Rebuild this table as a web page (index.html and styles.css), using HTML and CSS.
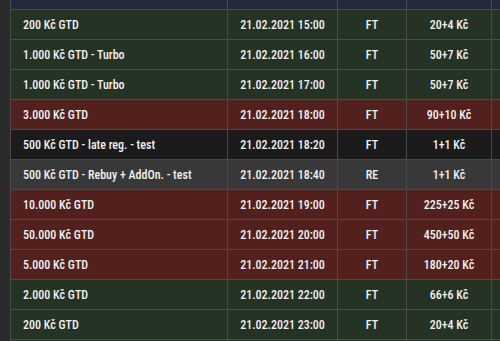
FILE: index.html
```html
<!DOCTYPE html>
<html>
<head>
<meta charset="utf-8">
<link rel="stylesheet" href="styles.css">
</head>
<body>
<div class="page">
  <div class="side"></div>
  <table class="list">
    <colgroup>
      <col class="c-name"><col class="c-date"><col class="c-type"><col class="c-buy"><col class="c-rest">
    </colgroup>
    <tr class="head"><td></td><td></td><td></td><td></td><td></td></tr>
    <tr class="green"><td class="name">200 Kč GTD</td><td>21.02.2021 15:00</td><td>FT</td><td>20+4 Kč</td><td></td></tr>
    <tr class="green"><td class="name">1.000 Kč GTD - Turbo</td><td>21.02.2021 16:00</td><td>FT</td><td>50+7 Kč</td><td></td></tr>
    <tr class="green"><td class="name">1.000 Kč GTD - Turbo</td><td>21.02.2021 17:00</td><td>FT</td><td>50+7 Kč</td><td></td></tr>
    <tr class="red"><td class="name">3.000 Kč GTD</td><td>21.02.2021 18:00</td><td>FT</td><td>90+10 Kč</td><td></td></tr>
    <tr class="black"><td class="name">500 Kč GTD - late reg. - test</td><td>21.02.2021 18:20</td><td>FT</td><td>1+1 Kč</td><td></td></tr>
    <tr class="gray"><td class="name">500 Kč GTD - Rebuy + AddOn. - test</td><td>21.02.2021 18:40</td><td>RE</td><td>1+1 Kč</td><td></td></tr>
    <tr class="red"><td class="name">10.000 Kč GTD</td><td>21.02.2021 19:00</td><td>FT</td><td>225+25 Kč</td><td></td></tr>
    <tr class="red"><td class="name">50.000 Kč GTD</td><td>21.02.2021 20:00</td><td>FT</td><td>450+50 Kč</td><td></td></tr>
    <tr class="red"><td class="name">5.000 Kč GTD</td><td>21.02.2021 21:00</td><td>FT</td><td>180+20 Kč</td><td></td></tr>
    <tr class="green"><td class="name">2.000 Kč GTD</td><td>21.02.2021 22:00</td><td>FT</td><td>66+6 Kč</td><td></td></tr>
    <tr class="green"><td class="name">200 Kč GTD</td><td>21.02.2021 23:00</td><td>FT</td><td>20+4 Kč</td><td></td></tr>
    <tr class="green"><td class="name"></td><td></td><td></td><td></td><td></td></tr>
  </table>
</div>
</body>
</html>
```

FILE: styles.css
```css
html, body {
  margin: 0;
  padding: 0;
  background: #2b2b2b;
  overflow: hidden;
}
.page {
  display: flex;
  width: 500px;
  height: 341px;
  overflow: hidden;
}
.side {
  flex: 0 0 10px;
  background: #2b2b2b;
}
.list {
  border-collapse: collapse;
  table-layout: fixed;
  width: 600px;
  margin-top: -21px;
  font-family: "Roboto Condensed", "Liberation Sans Narrow", Roboto, sans-serif;
  font-stretch: condensed;
  font-weight: 500;
  font-size: 12px;
  color: #f2f2f2;
}
.c-name { width: 217px; }
.c-date { width: 110px; }
.c-type { width: 69px; }
.c-buy { width: 85px; }
.c-rest { width: 119px; }
.list td {
  border: 1px solid #4a4a4a;
  height: 29px;
  padding: 0;
  text-align: center;
  white-space: nowrap;
  overflow: hidden;
}
.list td.name {
  text-align: left;
  padding-left: 12px;
}
.head td { background: #222a3b; }
.green td { background: #253325; }
.red td { background: #52211e; }
.black td { background: #1b1b1b; }
.gray td { background: #383838; }
```
